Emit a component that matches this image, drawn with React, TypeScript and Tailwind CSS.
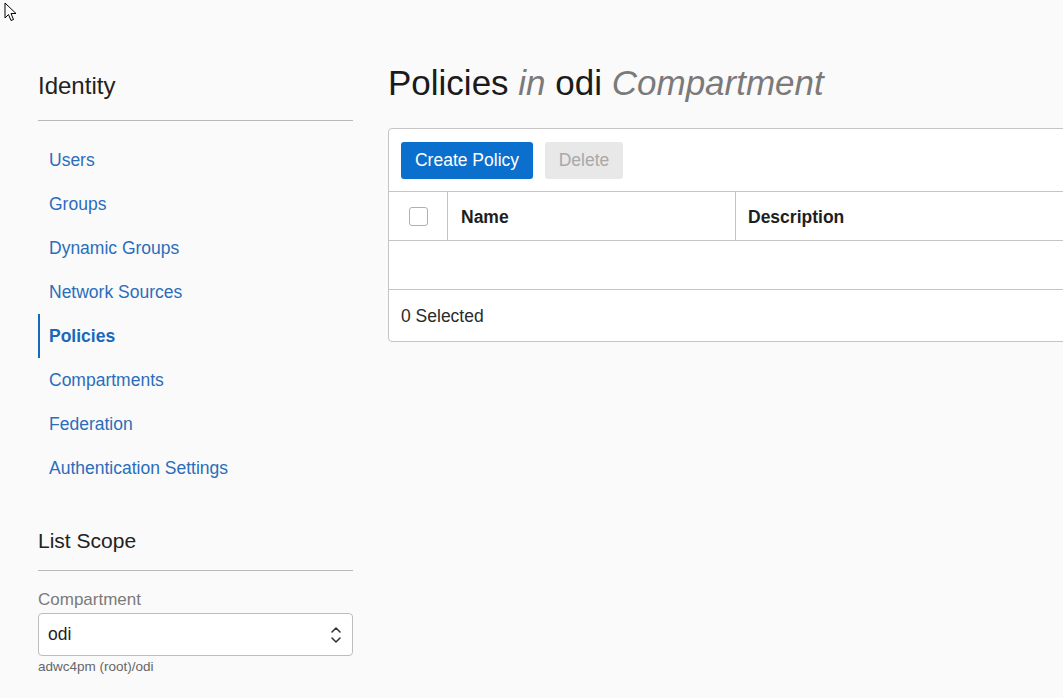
import React from "react";

const navItems = [
  "Users",
  "Groups",
  "Dynamic Groups",
  "Network Sources",
  "Policies",
  "Compartments",
  "Federation",
  "Authentication Settings",
];

const Cursor = () => (
  <svg
    className="absolute left-[4px] top-[2px]"
    width="14"
    height="20"
    viewBox="0 0 14 20"
  >
    <path
      d="M1 1 L1 16 L4.5 12.5 L7 18.5 L9.5 17.5 L7 11.5 L12 11.5 Z"
      fill="#fff"
      stroke="#000"
      strokeWidth="1"
      strokeLinejoin="round"
    />
  </svg>
);

const App = () => {
  return (
    <div className="relative w-[1063px] h-[698px] overflow-hidden bg-[#fafafa] font-['Liberation_Sans',Arial,sans-serif] text-[#161513]">
      <Cursor />
      <div className="flex pl-[38px] gap-[35px]">
        {/* sidebar */}
        <aside className="w-[315px] shrink-0 pt-[70px]">
          <h2 className="text-[24px] leading-[32px] pb-[18px] border-b border-[#b8b8b8] text-[#222]">
            Identity
          </h2>
          <nav className="mt-[17px] flex flex-col">
            {navItems.map((item) =>
              item === "Policies" ? (
                <div
                  key={item}
                  className="h-[44px] flex items-center pt-[1px] pl-[9px] border-l-[2px] border-[#1a68b9] text-[17.5px] font-bold text-[#1a68b9]"
                >
                  {item}
                </div>
              ) : (
                <div
                  key={item}
                  className="h-[44px] flex items-center pt-[1px] pl-[11px] text-[17.5px] text-[#2a6dbb]"
                >
                  {item}
                </div>
              )
            )}
          </nav>
          <h3 className="mt-[37px] text-[21px] leading-[28px] pb-[15px] border-b border-[#b8b8b8] text-[#222]">
            List Scope
          </h3>
          <div className="mt-[19px] text-[17px] leading-[20px] text-[#7a7a7a]">
            Compartment
          </div>
          <div className="mt-[3px] h-[43px] bg-white border border-[#bdbdbd] rounded-[4px] flex items-center justify-between pl-[9px] pr-[10px]">
            <span className="text-[17.5px] text-[#1e1e1e]">odi</span>
            <svg width="12" height="20" viewBox="0 0 12 20" fill="none">
              <path
                d="M2 7 L6 3 L10 7"
                stroke="#333"
                strokeWidth="1.6"
                strokeLinecap="round"
                strokeLinejoin="round"
              />
              <path
                d="M2 13 L6 17 L10 13"
                stroke="#333"
                strokeWidth="1.6"
                strokeLinecap="round"
                strokeLinejoin="round"
              />
            </svg>
          </div>
          <div className="mt-[2px] text-[13.5px] leading-[18px] text-[#666]">
            adwc4pm (root)/odi
          </div>
        </aside>

        {/* main */}
        <main className="flex-1 pt-[63px] min-w-0">
          <h1 className="text-[35px] leading-[40px] whitespace-nowrap text-[#1b1b1b]">
            Policies <i className="text-[#7a7a7a]">in</i> odi{" "}
            <i className="text-[#7a7a7a]">Compartment</i>
          </h1>
          <div className="mt-[25px] w-[700px] bg-white border border-[#c4c4c4] rounded-[4px]">
            <div className="flex gap-[12px] pl-[12px] pt-[13px] pb-[12px] border-b border-[#c4c4c4]">
              <button className="h-[37px] w-[132px] rounded-[3px] bg-[#0b6fce] text-white text-[17.5px]">
                Create Policy
              </button>
              <button className="h-[37px] w-[78px] rounded-[3px] bg-[#e8e8e8] text-[#a9a9a9] text-[17.5px]">
                Delete
              </button>
            </div>
            <div className="flex h-[49px] border-b border-[#c4c4c4]">
              <div className="w-[59px] border-r border-[#c4c4c4] flex items-center justify-center">
                <div className="w-[19px] h-[19px] rounded-[3px] border border-[#b0b0b0] bg-white" />
              </div>
              <div className="w-[288px] border-r border-[#c4c4c4] flex items-center pt-[2px] pl-[13px] text-[17.5px] font-bold text-[#1e1e1e]">
                Name
              </div>
              <div className="flex-1 flex items-center pt-[2px] pl-[12px] text-[17.5px] font-bold text-[#1e1e1e]">
                Description
              </div>
            </div>
            <div className="h-[49px] border-b border-[#c4c4c4]" />
            <div className="h-[51px] flex items-center pt-[1px] pl-[12px] text-[17.5px] text-[#2a2a2a]">
              0 Selected
            </div>
          </div>
        </main>
      </div>
    </div>
  );
};

export default App;
